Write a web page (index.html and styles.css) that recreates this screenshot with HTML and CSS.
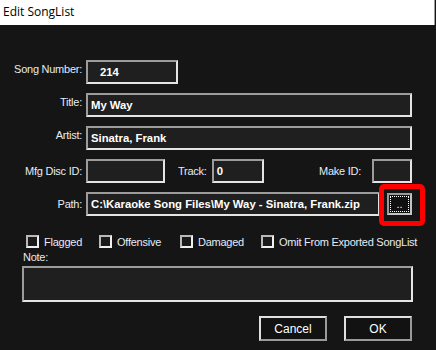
FILE: index.html
```html
<!DOCTYPE html>
<html lang="en">
<head>
  <meta charset="UTF-8">
  <title>Edit SongList</title>
  <link rel="stylesheet" href="styles.css">
</head>
<body>

  <div class="window">
    <div class="titlebar">Edit SongList</div>

    <div class="dialog">
      <div class="row row-top">
        <label class="lbl">Song Number:</label>
        <div class="field w-num num">214</div>
      </div>

      <div class="row row-top">
        <label class="lbl">Title:</label>
        <div class="field w-wide">My Way</div>
      </div>

      <div class="row row-top">
        <label class="lbl">Artist:</label>
        <div class="field w-wide">Sinatra, Frank</div>
      </div>

      <div class="row">
        <label class="lbl">Mfg Disc ID:</label>
        <div class="field w-disc"></div>
        <label class="lbl-inline track-lbl">Track:</label>
        <div class="field w-track">0</div>
        <label class="lbl-inline make-lbl">Make ID:</label>
        <div class="field w-make"></div>
      </div>

      <div class="row">
        <label class="lbl">Path:</label>
        <div class="field w-path">C:\Karaoke Song Files\My Way - Sinatra, Frank.zip</div>
        <div class="browse-wrap">
          <button class="browse"><span class="focus">..</span></button>
          <div class="highlight"></div>
        </div>
      </div>

      <div class="checks">
        <label class="check"><span class="box"></span>Flagged</label>
        <label class="check"><span class="box"></span>Offensive</label>
        <label class="check"><span class="box"></span>Damaged</label>
        <label class="check"><span class="box"></span>Omit From Exported SongList</label>
      </div>

      <div class="note-lbl">Note:</div>
      <div class="field note"></div>

      <div class="actions">
        <button class="btn">Cancel</button>
        <button class="btn">OK</button>
      </div>
    </div>
  </div>

</body>
</html>
```

FILE: styles.css
```css
body {
  margin: 0;
  background: #151515;
  font-family: 'Liberation Sans', Arial, sans-serif;
  font-size: 11px;
  letter-spacing: -0.25px;
  color: #e6ebf5;
}

.window {
  width: 436px;
  height: 350px;
  overflow: hidden;
  background: #151515;
}

.titlebar {
  height: 25px;
  width: 435px;
  border-right: 1px solid #9a9a9a;
  background: #ffffff;
  color: #000000;
  font-family: 'Open Sans', sans-serif;
  font-size: 12px;
  letter-spacing: 0;
  line-height: 23px;
  padding-left: 3px;
  box-sizing: border-box;
}

.dialog {
  padding-top: 35px;
}

.row {
  display: flex;
  align-items: center;
  width: 412px;
  height: 24px;
  margin-bottom: 9px;
}

.row-top {
  align-items: flex-start;
}

.row-top .lbl {
  padding-top: 3px;
}

.lbl {
  width: 82px;
  text-align: right;
  margin-right: 4px;
  flex: none;
}

.field {
  height: 24px;
  box-sizing: border-box;
  border: 2px solid;
  border-color: #9c9c9c #e4e4e4 #e4e4e4 #9c9c9c;
  background: #1f1f1f;
  color: #ffffff;
  font-weight: bold;
  font-size: 11.3px;
  letter-spacing: 0;
  line-height: 20px;
  padding-left: 3px;
  white-space: nowrap;
  overflow: hidden;
  flex: none;
}

.num {
  padding-left: 12px;
}

.w-num { width: 92px; }
.w-wide { width: 326px; }
.w-disc { width: 79px; }
.w-track { width: 52px; }
.w-make { width: 40px; }
.w-path { width: 294px; }

.lbl-inline {
  flex: none;
}

.track-lbl {
  margin-left: 13px;
  margin-right: 5px;
}

.make-lbl {
  margin-left: auto;
  margin-right: 11px;
}

.browse-wrap {
  position: relative;
  margin-left: 7px;
  align-self: flex-start;
  margin-top: 1px;
}

.browse {
  display: block;
  width: 25px;
  height: 22px;
  padding: 0;
  box-sizing: border-box;
  border: 2px solid;
  border-color: #9a9a9a #c4c4c4 #c4c4c4 #9a9a9a;
  background: #101010;
  color: #ffffff;
  font-family: 'Liberation Sans', Arial, sans-serif;
  font-size: 11px;
}

.browse .focus {
  display: block;
  height: 16px;
  margin: 1px;
  border: 1px dotted #ffffff;
  box-sizing: border-box;
  line-height: 14px;
  text-align: center;
}

.highlight {
  position: absolute;
  left: -8px;
  top: -9px;
  width: 46px;
  height: 42px;
  box-sizing: border-box;
  border: 5px solid #ff0000;
  border-radius: 5px;
}

.checks {
  display: grid;
  grid-template-columns: 73px 81px 81px auto;
  margin-top: 19px;
  padding-left: 26px;
}

.check {
  display: flex;
  align-items: center;
  height: 13px;
}

.box {
  width: 13px;
  height: 13px;
  box-sizing: border-box;
  border: 2px solid;
  border-color: #b8b8b8 #f0f0f0 #f0f0f0 #b8b8b8;
  background: #1a1a1a;
  margin-right: 5px;
  flex: none;
}

.note-lbl {
  margin-top: 3px;
  padding-left: 23px;
  line-height: 13px;
}

.note {
  margin-top: 2px;
  margin-left: 22px;
  width: 391px;
  height: 36px;
}

.actions {
  display: flex;
  justify-content: flex-end;
  gap: 17px;
  margin-top: 14px;
  padding-right: 24px;
}

.btn {
  width: 68px;
  height: 25px;
  box-sizing: border-box;
  border: 2px solid;
  border-color: #e0e0e0 #9a9a9a #9a9a9a #e0e0e0;
  background: #121212;
  color: #ffffff;
  font-family: 'Liberation Sans', Arial, sans-serif;
  font-size: 12px;
  letter-spacing: 0;
  padding: 0;
}
```
